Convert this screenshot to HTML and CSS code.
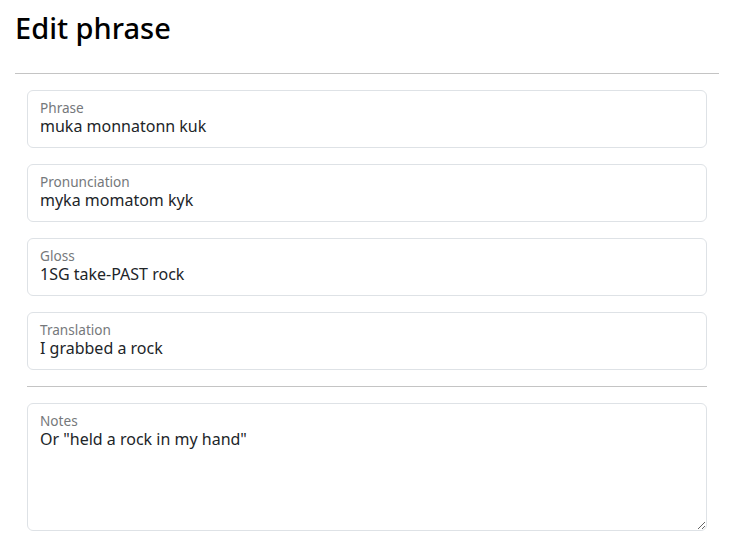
FILE: index.html
```html
<!DOCTYPE html>
<html lang="en">
<head>
<meta charset="utf-8">
<title>Edit phrase</title>
<link rel="stylesheet" href="styles.css">
</head>
<body>
<main class="page">
  <h2 class="title">Edit phrase</h2>
  <hr class="rule">
  <form class="form">
    <div class="field">
      <label class="field-label" for="phrase">Phrase</label>
      <input class="field-input" id="phrase" type="text" value="muka monnatonn kuk">
    </div>
    <div class="field">
      <label class="field-label" for="pron">Pronunciation</label>
      <input class="field-input" id="pron" type="text" value="myka momatom kyk">
    </div>
    <div class="field">
      <label class="field-label" for="gloss">Gloss</label>
      <input class="field-input" id="gloss" type="text" value="1SG take-PAST rock">
    </div>
    <div class="field">
      <label class="field-label" for="trans">Translation</label>
      <input class="field-input" id="trans" type="text" value="I grabbed a rock">
    </div>
    <hr class="rule rule-form">
    <div class="field field-notes">
      <label class="field-label" for="notes">Notes</label>
      <textarea class="field-textarea" id="notes">Or "held a rock in my hand"</textarea>
    </div>
  </form>
</main>
</body>
</html>
```

FILE: styles.css
```css
html, body {
  margin: 0;
  padding: 0;
  background: #ffffff;
}

body {
  font-family: "Noto Sans", "Open Sans", "DejaVu Sans", sans-serif;
  color: #212529;
}

.page {
  margin-left: 15px;
  width: 704px;
  padding-top: 11px;
}

.title {
  margin: 0;
  font-size: 29px;
  line-height: 34.8px;
  font-weight: 500;
  color: #000000;
}

.rule {
  margin: 27px 0 16px;
  border: 0;
  border-top: 1px solid #c4c4c4;
  height: 0;
}

.form {
  padding: 0 12px;
  display: flex;
  flex-direction: column;
  gap: 16px;
}

.rule-form {
  margin: 0;
}

.field {
  display: flex;
  flex-direction: column;
  border: 1px solid #dee2e6;
  border-radius: 6px;
  padding: 9px 0 11px;
  background: #ffffff;
}

.field-label {
  display: block;
  padding: 0 12px;
  font-size: 13.6px;
  line-height: 16px;
  color: #75787b;
}

.field-input,
.field-textarea {
  display: block;
  box-sizing: border-box;
  width: 100%;
  margin: 0;
  border: 0;
  outline: none;
  background: transparent;
  font-family: inherit;
  font-size: 16px;
  line-height: 20px;
  color: #212529;
  padding: 0 12px;
}

.field-input {
  height: 20px;
}

.field-notes {
  padding-bottom: 0;
  overflow: hidden;
}

.field-textarea {
  height: 101px;
  resize: vertical;
  padding-bottom: 2px;
  border-radius: 0 0 6px 6px;
}
```
